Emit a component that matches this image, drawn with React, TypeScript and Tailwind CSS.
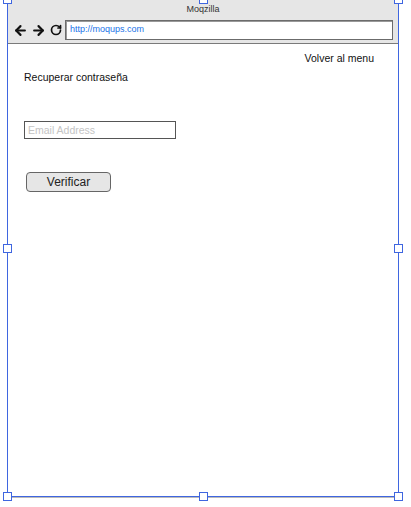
import React from "react";
import { ArrowLeft, ArrowRight, RotateCw } from "lucide-react";

const Handle = ({ className }: { className: string }) => (
  <div
    className={
      "absolute w-[9px] h-[9px] bg-white border border-[#3f66e0] " + className
    }
  />
);

const App = () => {
  return (
    <div
      className="relative w-[411px] h-[507px] bg-white overflow-hidden"
      style={{ fontFamily: '"Liberation Sans", Arial, sans-serif' }}
    >
      <div className="ml-[7px] w-[392px] h-[497px] border-x border-b border-[#3f66e0] shadow-[0_1px_0_#bbbbbb] flex flex-col">
        <div className="h-[44px] bg-[#e6e6e6] border-b border-[#7a7a7a] flex flex-col">
          <div className="h-[19px] pt-[4px] text-center text-[9px] leading-[11px] text-[#333]">
            Moqzilla
          </div>
          <div className="flex items-center pl-[5px] pr-[5px] h-[22px]">
            <ArrowLeft size={15} strokeWidth={3.4} className="text-[#111]" />
            <ArrowRight
              size={15}
              strokeWidth={3.4}
              className="text-[#111] ml-[3px]"
            />
            <RotateCw
              size={12}
              strokeWidth={3.4}
              className="text-[#111] ml-[4px]"
            />
            <div className="ml-[3px] flex-1 h-[20px] bg-white border border-[#6b6b6b] shadow-[inset_1px_1px_0_#999] flex items-center pl-[4px] text-[9px] text-[#1a73e8]">
              http://moqups.com
            </div>
          </div>
        </div>
        <div className="flex-1 bg-white flex flex-col">
          <div className="pt-[7px] pr-[24px] text-right text-[10.5px] leading-[14px] text-[#111]">
            Volver al menu
          </div>
          <div className="pl-[16px] pt-[5px] text-[10.5px] leading-[14px] text-[#111]">
            Recuperar contraseña
          </div>
          <div className="pl-[16px] pt-[33px]">
            <input
              placeholder="Email Address"
              className="w-[152px] h-[18px] border border-[#555] px-[3px] text-[10.5px] leading-[14px] placeholder-[#c4c4c4] outline-none"
            />
          </div>
          <div className="pl-[18px] pt-[28px]">
            <button className="w-[85px] h-[20px] bg-[#e6e6e6] border border-[#666] rounded-[4px] text-[12px] leading-[16px] text-[#222]">
              Verificar
            </button>
          </div>
        </div>
      </div>
      <Handle className="left-[3px] top-[-5px]" />
      <Handle className="left-[199px] top-[-5px]" />
      <Handle className="left-[394px] top-[-5px]" />
      <Handle className="left-[3px] top-[244px]" />
      <Handle className="left-[394px] top-[244px]" />
      <Handle className="left-[3px] top-[492px]" />
      <Handle className="left-[199px] top-[492px]" />
      <Handle className="left-[394px] top-[492px]" />
    </div>
  );
};

export default App;
